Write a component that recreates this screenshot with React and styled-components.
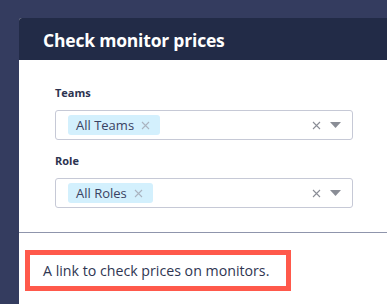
import React from "react";
import styled, { createGlobalStyle } from "styled-components";

const Global = createGlobalStyle`
  html, body { margin: 0; padding: 0; }
  body {
    background: #343c5f;
    font-family: "Open Sans", "Noto Sans", sans-serif;
    width: 387px;
    height: 304px;
    overflow: hidden;
  }
`;

const Page = styled.div`
  padding: 18px 0 0 19px;
  height: 304px;
  box-sizing: border-box;
  display: flex;
`;

const Card = styled.div`
  flex: 1;
  background: #ffffff;
  border-radius: 3px 0 0 0;
  display: flex;
  flex-direction: column;
  overflow: hidden;
`;

const Header = styled.div`
  height: 42px;
  background: #222b47;
  display: flex;
  align-items: center;
  padding-left: 24px;
  padding-top: 1px;
  box-sizing: border-box;
`;

const Title = styled.h1`
  margin: 0;
  color: #ffffff;
  font-size: 17.5px;
  font-weight: 700;
  letter-spacing: -0.2px;
`;

const Form = styled.div`
  padding: 25px 34px 24px 36px;
  display: flex;
  flex-direction: column;
  gap: 13px;
  border-bottom: 1px solid #8f95ac;
`;

const Field = styled.div`
  display: flex;
  flex-direction: column;
  gap: 9px;
`;

const Label = styled.label`
  font-size: 11px;
  line-height: 16px;
  font-weight: 700;
  color: #2c3350;
`;

const Select = styled.div`
  height: 30px;
  box-sizing: border-box;
  border: 1px solid #c6c9d6;
  border-radius: 3px;
  display: flex;
  align-items: center;
  padding: 0 11px 0 12px;
`;

const Chip = styled.span`
  display: inline-flex;
  align-items: center;
  height: 20px;
  background: #d3f0fd;
  border-radius: 3px;
  padding: 0 10px 0 8px;
  font-size: 13px;
  color: #3a4262;
  gap: 7px;
`;

const Spacer = styled.div`
  flex: 1;
`;

const Controls = styled.div`
  display: flex;
  align-items: center;
  gap: 9px;
`;

const Footer = styled.div`
  padding: 17px 0 0 6px;
`;

const Highlight = styled.div`
  display: inline-flex;
  align-items: center;
  box-sizing: border-box;
  width: 266px;
  height: 41px;
  border: 5px solid #ff594b;
  padding-left: 13px;
  font-size: 14.2px;
  color: #2f3652;
`;

const CrossIcon = ({ color, size }) => (
  <svg width={size} height={size} viewBox="0 0 9 9">
    <path d="M1 1 L8 8 M8 1 L1 8" stroke={color} strokeWidth="1.1" fill="none" />
  </svg>
);

const Arrow = () => (
  <svg width="11" height="6" viewBox="0 0 11 6">
    <path d="M0 0 H11 L5.5 6 Z" fill="#8a8d96" />
  </svg>
);

const SelectBox = ({ value }) => (
  <Select>
    <Chip>
      {value}
      <CrossIcon color="#aab4c0" size={9} />
    </Chip>
    <Spacer />
    <Controls>
      <CrossIcon color="#8a8d96" size={9} />
      <Arrow />
    </Controls>
  </Select>
);

export default function App() {
  return (
    <>
      <Global />
      <Page>
        <Card>
          <Header>
            <Title>Check monitor prices</Title>
          </Header>
          <Form>
            <Field>
              <Label>Teams</Label>
              <SelectBox value="All Teams" />
            </Field>
            <Field>
              <Label>Role</Label>
              <SelectBox value="All Roles" />
            </Field>
          </Form>
          <Footer>
            <Highlight>A link to check prices on monitors.</Highlight>
          </Footer>
        </Card>
      </Page>
    </>
  );
}
